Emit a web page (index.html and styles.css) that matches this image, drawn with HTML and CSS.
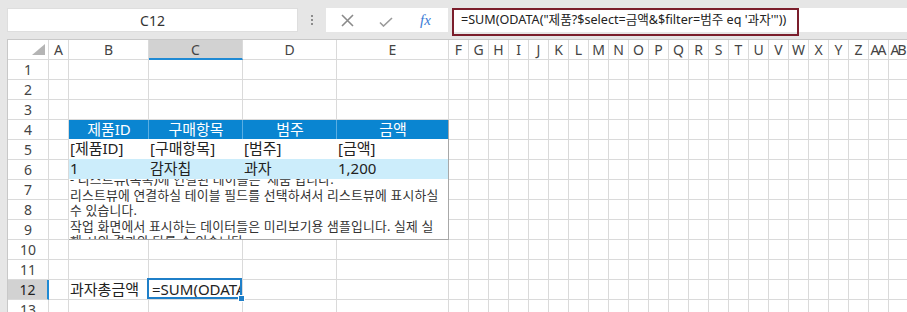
FILE: index.html
```html
<!doctype html>
<html lang="ko">
  <head>
    <meta charset="UTF-8" />
    <meta name="viewport" content="width=device-width, initial-scale=1.0" />
    <title>과자 총금액</title>
    <link rel="stylesheet" href="styles.css">
  </head>

  <body>
    <div class="toolbar">
      <div class="name-box">C12</div>
      <div class="grip"><span></span><span></span><span></span></div>
      <div class="formula-buttons">
        <svg class="btn-cancel" width="13" height="13" viewBox="0 0 13 13">
          <path d="M1 1 L12 12 M12 1 L1 12" stroke="#8a8a8a" stroke-width="1.6" fill="none" />
        </svg>
        <svg class="btn-enter" width="14" height="10" viewBox="0 0 14 10">
          <path d="M1 5.5 L4.5 9 L13 1" stroke="#9a9a9a" stroke-width="1.6" fill="none" />
        </svg>
        <span class="btn-fx">fx</span>
      </div>
      <div class="formula-bar">
        <div class="formula-text">=SUM(ODATA("제품?$select=금액&amp;$filter=범주 eq '과자'"))</div>
      </div>
    </div>

    <div class="sheet">
      <!-- column headers -->
      <div class="corner"><span class="corner-mark"></span></div>
      <div class="col-head">A</div>
      <div class="col-head">B</div>
      <div class="col-head selected">C</div>
      <div class="col-head">D</div>
      <div class="col-head">E</div>
      <div class="col-head">F</div>
      <div class="col-head">G</div>
      <div class="col-head">H</div>
      <div class="col-head">I</div>
      <div class="col-head">J</div>
      <div class="col-head">K</div>
      <div class="col-head">L</div>
      <div class="col-head">M</div>
      <div class="col-head">N</div>
      <div class="col-head">O</div>
      <div class="col-head">P</div>
      <div class="col-head">Q</div>
      <div class="col-head">R</div>
      <div class="col-head">S</div>
      <div class="col-head">T</div>
      <div class="col-head">U</div>
      <div class="col-head">V</div>
      <div class="col-head">W</div>
      <div class="col-head">X</div>
      <div class="col-head">Y</div>
      <div class="col-head">Z</div>
      <div class="col-head wide">AA</div>
      <div class="col-head wide">AB</div>

      <!-- empty columns F:AB -->
      <div class="rest"></div>

      <!-- list view bound to B4:E9 -->
      <div class="listview">
        <div class="lv-row lv-head">
          <span>제품ID</span><span>구매항목</span><span>범주</span><span>금액</span>
        </div>
        <div class="lv-row lv-field">
          <span>[제품ID]</span><span>[구매항목]</span><span>[범주]</span><span>[금액]</span>
        </div>
        <div class="lv-row lv-sample">
          <span>1</span><span>감자칩</span><span>과자</span><span>1,200</span>
        </div>
        <div class="lv-note">
          <p>- 리스트뷰(목록)에 연결된 테이블은 '제품'입니다.</p>
          <p>리스트뷰에 연결하실 테이블 필드를 선택하셔서 리스트뷰에 표시하실 수 있습니다.</p>
          <p>작업 화면에서 표시하는 데이터들은 미리보기용 샘플입니다. 실제 실행 시의 결과와 다를 수 있습니다.</p>
        </div>
      </div>

      <div class="row-head">1</div>
      <div class="cell"></div><div class="cell"></div><div class="cell"></div><div class="cell"></div><div class="cell"></div>
      <div class="row-head">2</div>
      <div class="cell"></div><div class="cell"></div><div class="cell"></div><div class="cell"></div><div class="cell"></div>
      <div class="row-head">3</div>
      <div class="cell"></div><div class="cell"></div><div class="cell"></div><div class="cell"></div><div class="cell"></div>
      <div class="row-head">4</div>
      <div class="cell"></div>
      <div class="row-head">5</div>
      <div class="cell"></div>
      <div class="row-head">6</div>
      <div class="cell"></div>
      <div class="row-head">7</div>
      <div class="cell"></div>
      <div class="row-head">8</div>
      <div class="cell"></div>
      <div class="row-head">9</div>
      <div class="cell"></div>
      <div class="row-head">10</div>
      <div class="cell"></div><div class="cell"></div><div class="cell"></div><div class="cell"></div><div class="cell"></div>
      <div class="row-head">11</div>
      <div class="cell"></div><div class="cell"></div><div class="cell"></div><div class="cell"></div><div class="cell"></div>
      <div class="row-head selected">12</div>
      <div class="cell"></div>
      <div class="cell">과자총금액</div>
      <div class="cell active"><span class="cell-text">=SUM(ODATA("제품?$select=금액&amp;$filter=범주 eq '과자'"))</span></div>
      <div class="cell"></div><div class="cell"></div>
      <div class="row-head">13</div>
      <div class="cell"></div><div class="cell"></div><div class="cell"></div><div class="cell"></div><div class="cell"></div>
    </div>
  </body>
</html>
```

FILE: styles.css
```css
/* General styles */
body {
  margin: 0;
  width: 907px;
  height: 312px;
  background: #e6e6e6;
  font-family: 'Noto Sans', 'Noto Sans CJK KR', sans-serif;
  color: #222;
  overflow: hidden;
}

/* Formula toolbar */
.toolbar {
  display: flex;
  align-items: flex-start;
  height: 39px;
  padding: 8px 0 0 7px;
  box-sizing: border-box;
}

.name-box {
  width: 291px;
  height: 24px;
  box-sizing: border-box;
  background: #fff;
  border: 1px solid #dedede;
  display: flex;
  align-items: center;
  justify-content: center;
  font-size: 14px;
  color: #333;
}

.grip {
  width: 28px;
  height: 24px;
  display: flex;
  flex-direction: column;
  align-items: center;
  justify-content: center;
  gap: 2px;
}

.grip span {
  width: 2px;
  height: 2px;
  background: #8c8c8c;
}

.formula-buttons {
  width: 122px;
  height: 24px;
  background: #fff;
  display: flex;
  align-items: center;
}

.btn-cancel {
  margin-left: 15px;
}

.btn-enter {
  margin-left: 25px;
  margin-top: 4px;
}

.btn-fx {
  margin-left: 27px;
  font-family: 'Liberation Serif', serif;
  font-style: italic;
  font-size: 15px;
  color: #3b7bd6;
}

.formula-bar {
  flex: 1;
  height: 24px;
  margin-left: 4px;
  background: #fff;
}

.formula-text {
  width: 347px;
  height: 28px;
  box-sizing: border-box;
  border: 2px solid #7b1e2c;
  padding-left: 7px;
  font-size: 12.6px;
  line-height: 20px;
  color: #222;
  white-space: nowrap;
  overflow: hidden;
}

/* Sheet grid */
.sheet {
  display: grid;
  grid-template-columns: 41px 20px 80px 94px 94px 112px repeat(23, 20px);
  grid-auto-rows: 20px;
  width: max-content;
  margin-left: 7px;
  border-left: 1px solid #c8c8c8;
  border-top: 1px solid #c8c8c8;
  background: #fff;
}

.corner,
.col-head,
.row-head,
.cell {
  box-sizing: border-box;
  border-right: 1px solid #dadada;
  border-bottom: 1px solid #dadada;
  white-space: nowrap;
}

.corner {
  position: relative;
}

.corner-mark {
  position: absolute;
  right: 3px;
  bottom: 4px;
  width: 0;
  height: 0;
  border-left: 13px solid transparent;
  border-bottom: 11px solid #b4b4b4;
}

.col-head,
.row-head {
  font-size: 14px;
  line-height: 19px;
  text-align: center;
  color: #444;
  overflow: hidden;
}

.col-head.wide {
  letter-spacing: -2px;
  text-indent: -2px;
}

.col-head.selected {
  background: #d2d2d2;
  border-bottom: 2px solid #1f8ad4;
}

.row-head.selected {
  background: #d2d2d2;
  border-right: 2px solid #1f8ad4;
  color: #222;
}

.cell {
  font-size: 15px;
  line-height: 19px;
  padding-left: 1px;
  overflow: hidden;
}

.cell.active {
  position: relative;
  overflow: visible;
}

.cell-text {
  display: block;
  overflow: hidden;
  padding-left: 2px;
}

.cell.active::after {
  content: '';
  position: absolute;
  left: -2px;
  top: -2px;
  right: 0;
  bottom: 0;
  border: 2px solid #1f7fc8;
}

.cell.active::before {
  content: '';
  position: absolute;
  right: -3px;
  bottom: -3px;
  width: 5px;
  height: 5px;
  background: #1f7fc8;
  border: 1px solid #fff;
  z-index: 1;
}

.rest {
  grid-column: 7 / span 23;
  grid-row: 2 / span 13;
  background-image:
    repeating-linear-gradient(90deg, transparent 0 19px, #dadada 19px 20px),
    repeating-linear-gradient(180deg, transparent 0 19px, #dadada 19px 20px);
}

/* List view */
.listview {
  grid-column: 3 / span 4;
  grid-row: 5 / span 6;
  margin: -1px 0 0 -1px;
  border: 1px solid #a8a8a8;
  border-top-color: #0a85d1;
  background: #fff;
  display: flex;
  flex-direction: column;
  overflow: hidden;
}

.lv-row {
  display: grid;
  grid-template-columns: 80px 94px 94px 111px;
  height: 20px;
  font-size: 15px;
  line-height: 19px;
}

.lv-row span {
  padding-left: 1px;
  overflow: hidden;
  white-space: nowrap;
}

.lv-head {
  height: 19px;
  background: #0a85d1;
  color: #fff;
}

.lv-head span {
  text-align: center;
  border-right: 1px solid #5aaee3;
  line-height: 18px;
}

.lv-head span:last-child {
  border-right: none;
}

.lv-sample {
  background: #ccedfb;
}

.lv-note {
  height: 60px;
  overflow: hidden;
  padding-left: 1px;
  font-size: 12.8px;
  line-height: 15.5px;
  letter-spacing: 0.2px;
  color: #333;
  word-break: break-all;
}

.lv-note p {
  margin: 0;
  width: 374px;
}

.lv-note p:first-child {
  margin-top: -7px;
}
```
